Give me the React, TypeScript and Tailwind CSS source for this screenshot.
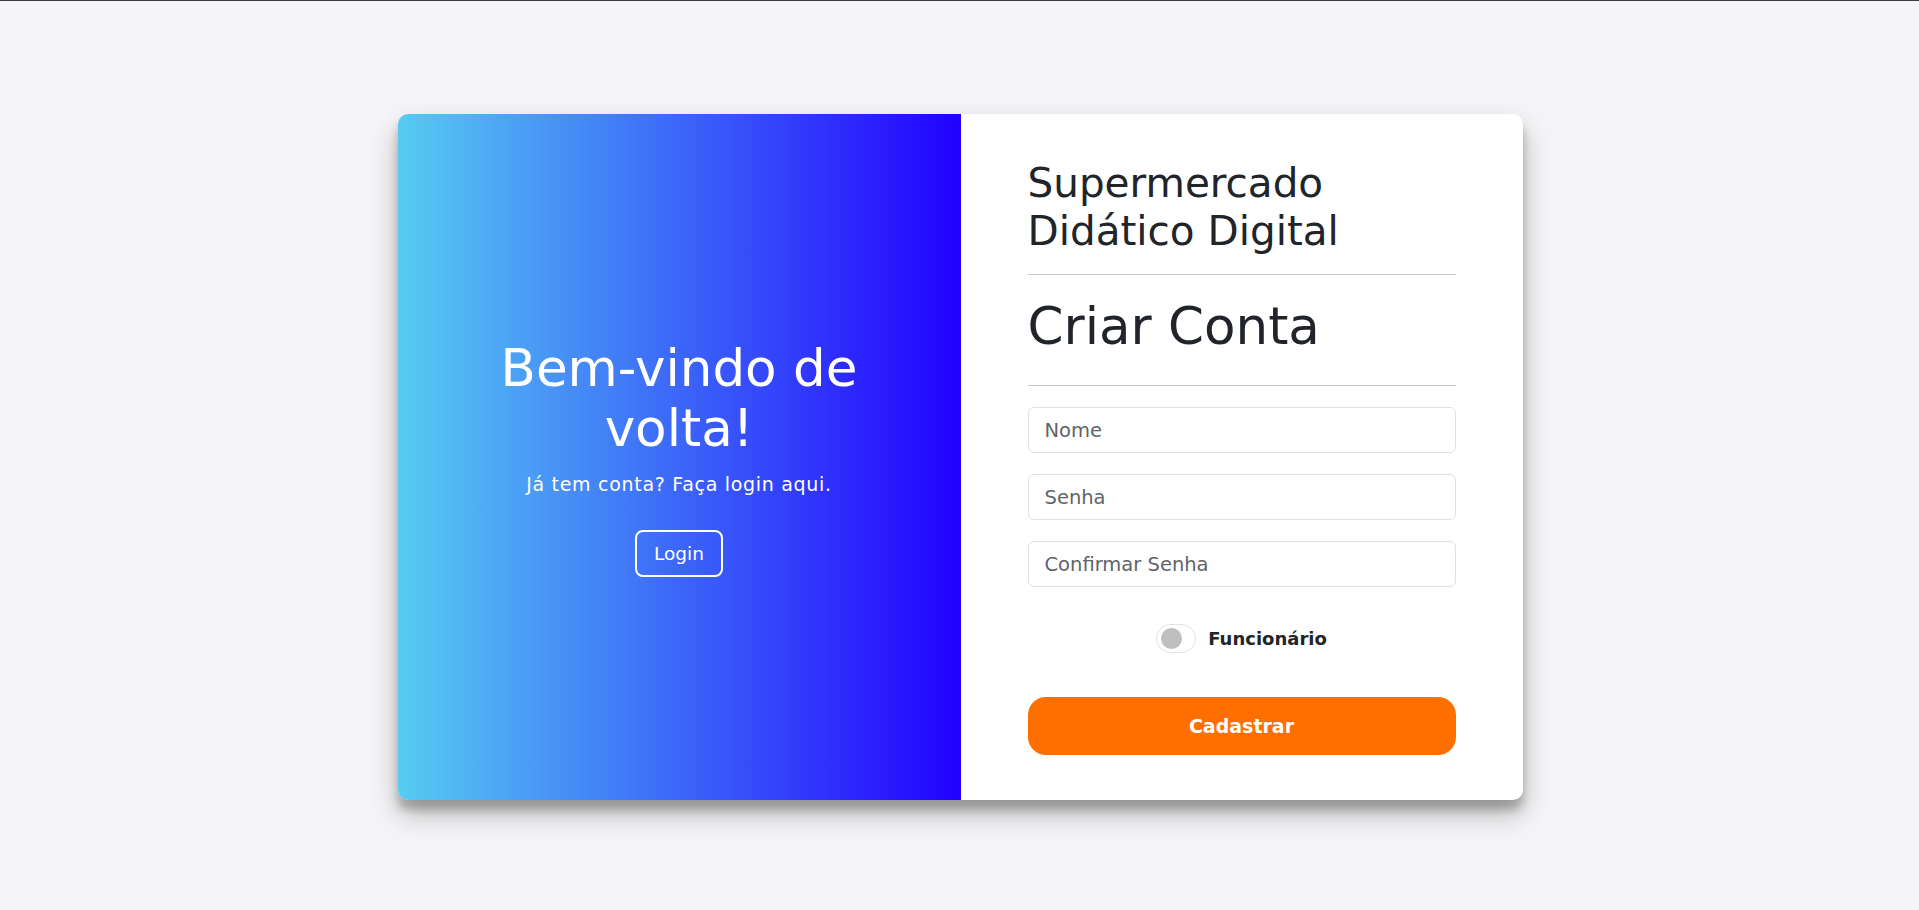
import { useState } from "react";

export default function App() {
  const [funcionario, setFuncionario] = useState(false);

  return (
    <div className="min-h-screen bg-[#f5f5f7] border-t border-[#3c3c3c] pt-[113px] pl-px font-['DejaVu_Sans',sans-serif]">
      <div className="mx-auto flex w-[1125px] rounded-[10px] bg-white shadow-[0_14px_28px_rgba(0,0,0,0.25),0_10px_10px_rgba(0,0,0,0.22)]">
        {/* overlay side */}
        <div className="flex w-[563px] flex-col items-center justify-center rounded-l-[10px] bg-[linear-gradient(to_right,#56ccf2,#2200ff)] px-[50px] text-center text-white">
          <h1 className="text-[51.5px] leading-[60px]">Bem-vindo de volta!</h1>
          <p className="mt-3 text-[19px] leading-[28px] tracking-[0.7px]">
            Já tem conta? Faça login aqui.
          </p>
          <button className="mt-8 rounded-[8px] border-2 border-white px-[17px] py-[8px] text-[18.5px] leading-[27px]">
            Login
          </button>
        </div>

        {/* form side */}
        <div className="w-[562px] px-[67px] py-[45px] text-[#212529]">
          <h2 className="text-[40.5px] leading-[48px]">Supermercado Didático Digital</h2>
          <hr className="mt-[19px] border-t border-[#c8c9ca]" />
          <h3 className="mt-[21px] text-[51.5px] leading-[60px]">Criar Conta</h3>
          <hr className="mt-[29px] border-t border-[#c8c9ca]" />

          <form className="mt-[21px] flex flex-col gap-[21px]">
            {["Nome", "Senha", "Confirmar Senha"].map((ph) => (
              <input
                key={ph}
                type={ph === "Nome" ? "text" : "password"}
                placeholder={ph}
                className="h-[46px] w-full rounded-[6px] border border-[#dee2e6] px-4 text-[19.5px] outline-none placeholder:text-[#5f6469]"
              />
            ))}
          </form>

          <div className="mt-[37px] flex items-center justify-center gap-3">
            <button
              type="button"
              onClick={() => setFuncionario(!funcionario)}
              className={`flex h-[29px] w-[40px] items-center rounded-full border border-[#dee2e6] px-[4px] ${
                funcionario ? "justify-end bg-[#ff6f00]" : "justify-start bg-white"
              }`}
            >
              <span
                className={`h-[21px] w-[21px] rounded-full ${
                  funcionario ? "bg-white" : "bg-[#bfbfbf]"
                }`}
              />
            </button>
            <span className="text-[18px] font-bold leading-[27px]">Funcionário</span>
          </div>

          <button className="mt-[44px] h-[58px] w-full rounded-[18px] bg-[#ff6f00] text-[19px] font-bold text-white">
            Cadastrar
          </button>
        </div>
      </div>
    </div>
  );
}
